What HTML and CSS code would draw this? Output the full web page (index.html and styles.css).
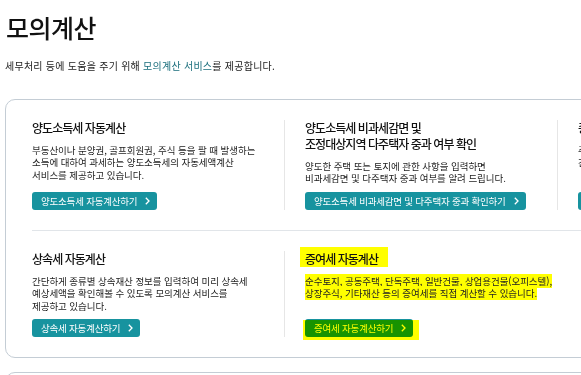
FILE: index.html
```html
<!DOCTYPE html>
<html lang="ko">
<head>
  <meta charset="UTF-8">
  <title>모의계산</title>
  <link rel="stylesheet" href="styles.css">
</head>
<body>

  <!-- === Page heading === -->
  <div class="page">
    <h1 class="page-title">모의계산</h1>
    <p class="intro">세무처리 등에 도움을 주기 위해 <span class="accent">모의계산 서비스</span>를 제공합니다.</p>

    <!-- === Calculator list === -->
    <div class="calc-box">
      <div class="calc-row">
        <div class="calc-card">
          <h2 class="calc-title">양도소득세 자동계산</h2>
          <p class="calc-desc">부동산이나 분양권, 골프회원권, 주식 등을 팔 때 발생하는<br>소득에 대하여 과세하는 양도소득세의 자동세액계산<br>서비스를 제공하고 있습니다.</p>
          <a class="calc-btn" href="#">양도소득세 자동계산하기
            <svg width="5" height="8" viewBox="0 0 5 8"><polyline points="0.8,0.8 4,4 0.8,7.2" /></svg>
          </a>
        </div>
        <div class="calc-card">
          <h2 class="calc-title">양도소득세 비과세감면 및<br>조정대상지역 다주택자 중과 여부 확인</h2>
          <p class="calc-desc">양도한 주택 또는 토지에 관한 사항을 입력하면<br>비과세감면 및 다주택자 중과 여부를 알려 드립니다.</p>
          <a class="calc-btn" href="#">양도소득세 비과세감면 및 다주택자 중과 확인하기
            <svg width="5" height="8" viewBox="0 0 5 8"><polyline points="0.8,0.8 4,4 0.8,7.2" /></svg>
          </a>
        </div>
        <div class="calc-card">
          <h2 class="calc-title">종합부동산세 자동계산</h2>
          <p class="calc-desc">주택 및 토지의 공시가격을 입력하여 종합부동산세를<br>간편하게 계산해 볼 수 있습니다.</p>
          <a class="calc-btn" href="#">종합부동산세 자동계산하기
            <svg width="5" height="8" viewBox="0 0 5 8"><polyline points="0.8,0.8 4,4 0.8,7.2" /></svg>
          </a>
        </div>
      </div>

      <div class="calc-row">
        <div class="calc-card">
          <h2 class="calc-title">상속세 자동계산</h2>
          <p class="calc-desc">간단하게 종류별 상속재산 정보를 입력하여 미리 상속세<br>예상세액을 확인해볼 수 있도록 모의계산 서비스를<br>제공하고 있습니다.</p>
          <a class="calc-btn" href="#">상속세 자동계산하기
            <svg width="5" height="8" viewBox="0 0 5 8"><polyline points="0.8,0.8 4,4 0.8,7.2" /></svg>
          </a>
        </div>
        <div class="calc-card">
          <h2 class="calc-title"><span class="marker marker-title">증여세 자동계산</span></h2>
          <p class="calc-desc"><span class="marker">순수토지, 공동주택, 단독주택, 일반건물, 상업용건물(오피스텔),<br>상장주식, 기타재산 등의 증여세를 직접 계산할 수 있습니다.</span></p>
          <span class="marker-btn">
            <a class="calc-btn" href="#">증여세 자동계산하기
              <svg width="5" height="8" viewBox="0 0 5 8"><polyline points="0.8,0.8 4,4 0.8,7.2" /></svg>
            </a>
          </span>
        </div>
      </div>
    </div>

    <div class="calc-box next-box"></div>
  </div>

</body>
</html>
```

FILE: styles.css
```css
/* Base styling */
body {
  margin: 0;
  font-family: "Noto Sans CJK KR", "Noto Sans", sans-serif;
  color: #222;
  background-color: #fff;
  overflow-x: hidden;
}

.page {
  padding: 12px 0 0 5px;
}

/* Heading */
.page-title {
  margin: 0 0 17px 1px;
  font-size: 25px;
  line-height: 30px;
  font-weight: 500;
  letter-spacing: -0.5px;
  color: #111;
}

.intro {
  margin: 0 0 26px;
  font-size: 10px;
  line-height: 14px;
  letter-spacing: 0.25px;
}

.accent {
  color: #1a6e7c;
}

/* Calculator box */
.calc-box {
  width: 900px;
  border: 1px solid #c4cdd5;
  border-radius: 10px;
}

.next-box {
  margin-top: 14px;
  height: 40px;
}

.calc-row {
  display: flex;
  gap: 20px;
  margin-left: 26px;
  padding: 20px 0;
}

.calc-row + .calc-row {
  border-top: 1px solid #e1e5e9;
}

.calc-card {
  flex: 0 0 253px;
  box-sizing: border-box;
  display: flex;
  flex-direction: column;
  align-items: flex-start;
}

.calc-card:not(:last-child) {
  border-right: 1px solid #e6e6e6;
}

.calc-title {
  margin: 0 0 8px;
  font-size: 12px;
  line-height: 16px;
  font-weight: 500;
  letter-spacing: -0.95px;
  color: #111;
}

.calc-desc {
  margin: 0 0 7px;
  font-size: 9.5px;
  line-height: 12.4px;
  letter-spacing: -0.05px;
  white-space: nowrap;
}

/* Teal link button */
.calc-btn {
  display: inline-flex;
  align-items: center;
  gap: 8px;
  height: 18px;
  padding: 0 7px 0 9px;
  margin-top: auto;
  background-color: #17939f;
  border-radius: 3px;
  color: #fff;
  font-size: 9.5px;
  letter-spacing: -0.2px;
  text-decoration: none;
  white-space: nowrap;
}

.calc-btn svg {
  fill: none;
  stroke: #fff;
  stroke-width: 1.3;
}

/* Yellow highlighter marks */
.marker {
  background-color: #ffff00;
  -webkit-box-decoration-break: clone;
  box-decoration-break: clone;
}

.marker-title {
  padding: 3px 10px 0 5px;
  margin-left: -5px;
}

.marker-btn {
  position: relative;
  display: inline-flex;
  margin-top: auto;
}

.marker-btn::after {
  content: "";
  position: absolute;
  top: 1px;
  left: -2px;
  right: -6px;
  bottom: -3px;
  background-color: #ffff00;
  mix-blend-mode: multiply;
}
```
